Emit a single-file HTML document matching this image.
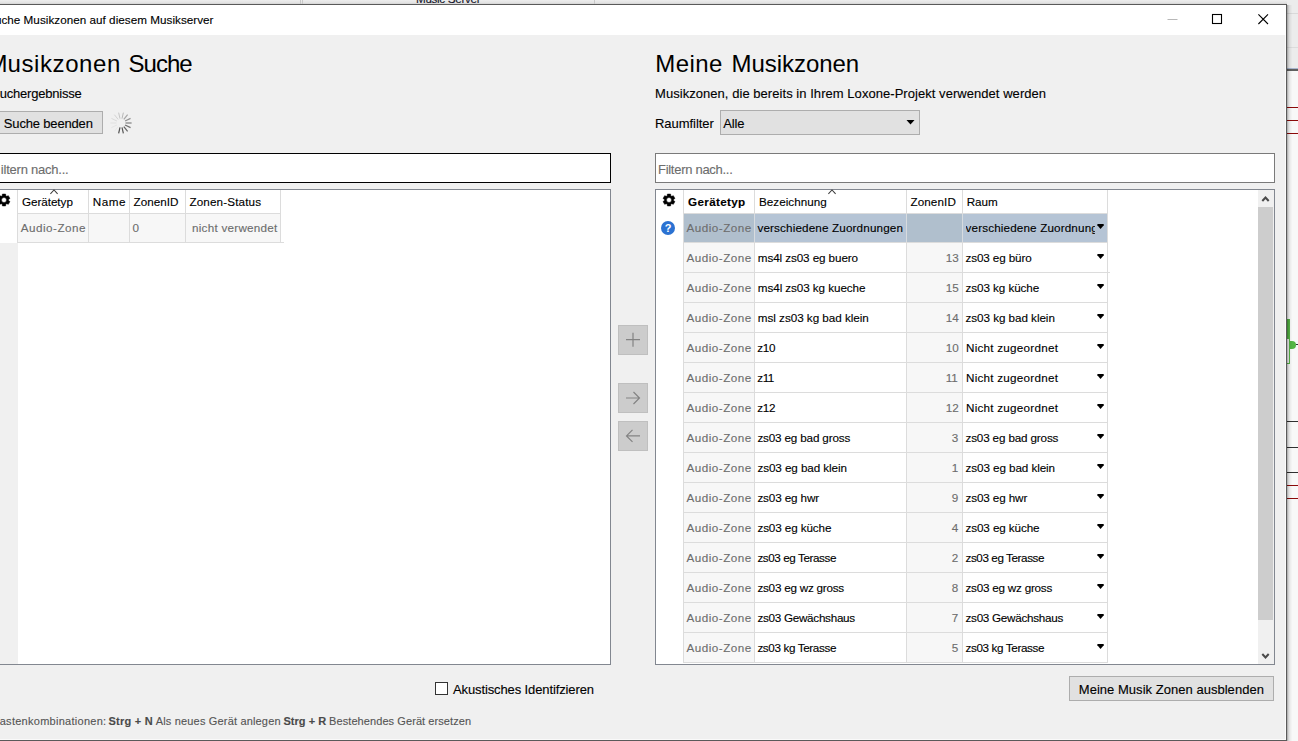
<!DOCTYPE html>
<html lang="de"><head><meta charset="utf-8"><title>Suche Musikzonen auf diesem Musikserver</title>
<style>
html,body{margin:0;padding:0}
body{width:1298px;height:741px;overflow:hidden;position:relative;background:#fff;font-family:"Liberation Sans",sans-serif;font-size:12px;color:#000}
div,span,svg{position:absolute;box-sizing:border-box}
.t{white-space:pre;line-height:1;display:block;-webkit-text-stroke:.12px currentColor}
.h{-webkit-text-stroke:0}
#win{left:0;top:4px;width:1287px;height:737px;background:#f0f0f0;border:1px solid #5a5a5a;border-left:none;overflow:hidden}
#tb{left:0;top:0;width:1286px;height:30px;background:#fff}
.inp{background:#fff;border:1px solid #7a7a7a}
.grid{background:#fff;border:1px solid #828790;overflow:hidden}
.btn{background:#e1e1e1;border:1px solid #adadad}
.vl{width:1px;background:#dcdcdc}
.hl{height:1px;background:#dcdcdc}
.c{background:#f7f7f7}
.dd{width:0;height:0;border-left:3.6px solid transparent;border-right:3.6px solid transparent;border-top:4.8px solid #000}
</style></head><body>
<div id="bg" style="left:0;top:0;width:1298px;height:741px;background:#fff;overflow:hidden">
<div style="left:0;top:0;width:1298px;height:5px;background:linear-gradient(#ededed,#e2e2e2 60%,#bdbdbd)"></div>
<div style="left:300px;top:0;width:1px;height:4px;background:#c8c8c8"></div><div style="left:302px;top:0;width:1px;height:4px;background:#c8c8c8"></div>
<div style="left:594px;top:0;width:1px;height:4px;background:#c8c8c8"></div>
<span class="t" style="left:416.00px;top:-6.70px;font-size:11.7px;letter-spacing:-0.328px;color:#15152a;">Music Server</span>
<div style="left:1287px;top:0;width:11px;height:741px;background:#f8f8f8"></div>
<div style="left:1287px;top:0;width:11px;height:69px;background:#ececec"></div>
<div style="left:1287px;top:13px;width:11px;height:1px;background:#d9d9d9"></div>
<div style="left:1287px;top:47px;width:11px;height:1px;background:#dcdcdc"></div>
<div style="left:1287px;top:68px;width:11px;height:1px;background:#a9b6cf"></div>
<div style="left:1287px;top:69px;width:11px;height:2px;background:#606060"></div>
<div style="left:1287px;top:107px;width:11px;height:1px;background:#8b0a0a"></div>
<div style="left:1287px;top:120px;width:11px;height:1px;background:#8b0a0a"></div>
<div style="left:1287px;top:133px;width:11px;height:1px;background:#8b0a0a"></div>
<div style="left:1287px;top:319px;width:3px;height:45px;border:1px solid #55b545;border-left:none;border-top:none;background:#f4f4f4"></div>
<div style="left:1287px;top:319px;width:3px;height:20px;background:#55b545"></div>
<div style="left:1290px;top:341px;width:6px;height:8px;border-radius:0 4px 4px 0;background:#55b545"></div>
<div style="left:1296px;top:344px;width:2px;height:1px;background:#333"></div>
<div style="left:1287px;top:421px;width:11px;height:1px;background:#303030"></div>
<div style="left:1287px;top:447px;width:11px;height:1px;background:#303030"></div>
<div style="left:1287px;top:472px;width:11px;height:1px;background:#303030"></div>
<div style="left:1287px;top:485px;width:11px;height:1px;background:#8b0a0a"></div>
<div style="left:1287px;top:498px;width:11px;height:1px;background:#8b0a0a"></div>
<div style="left:1287px;top:5px;width:1px;height:736px;background:rgba(0,0,0,.27)"></div><div style="left:1288px;top:5px;width:1px;height:736px;background:rgba(0,0,0,.15)"></div><div style="left:1289px;top:5px;width:1px;height:736px;background:rgba(0,0,0,.08)"></div><div style="left:1290px;top:5px;width:1px;height:736px;background:rgba(0,0,0,.045)"></div><div style="left:1291px;top:5px;width:1px;height:736px;background:rgba(0,0,0,.02)"></div>
</div>
<div id="win"><div id="tb"></div><div style="left:1285px;top:30px;width:1px;height:705px;background:#fbfbfb"></div><div style="left:0;top:734px;width:1286px;height:1px;background:#fafafa"></div>
<svg style="left:1160px;top:5px" width="120" height="20" viewBox="0 0 120 20" fill="none"><path d="M7.5 9.5h10" stroke="#b8b8b8" stroke-width="1"/><rect x="52.5" y="4.5" width="9" height="9" stroke="#000" stroke-width="1.1"/><path d="M98.4 4.4l9.6 9.6M108 4.4l-9.6 9.6" stroke="#000" stroke-width="1.1"/></svg>
<div class="btn" style="left:-10px;top:106px;width:113px;height:23px;"></div>
<svg style="left:109.2px;top:105.9px" width="24" height="24" viewBox="-12 -12 24 24"><line x1="-1.00" y1="4.39" x2="-2.36" y2="10.33" stroke="#505050" stroke-width="1.2"/><line x1="1.00" y1="4.39" x2="2.36" y2="10.33" stroke="#555555" stroke-width="1.2"/><line x1="2.81" y1="3.52" x2="6.61" y2="8.29" stroke="#626262" stroke-width="1.2"/><line x1="4.05" y1="1.95" x2="9.55" y2="4.60" stroke="#707070" stroke-width="1.2"/><line x1="4.50" y1="0.00" x2="10.60" y2="0.00" stroke="#7e7e7e" stroke-width="1.2"/><line x1="4.05" y1="-1.95" x2="9.55" y2="-4.60" stroke="#929292" stroke-width="1.2"/><line x1="2.81" y1="-3.52" x2="6.61" y2="-8.29" stroke="#a6a6a6" stroke-width="1.2"/><line x1="1.00" y1="-4.39" x2="2.36" y2="-10.33" stroke="#b8b8b8" stroke-width="1"/><line x1="-1.00" y1="-4.39" x2="-2.36" y2="-10.33" stroke="#c6c6c6" stroke-width="1"/><line x1="-2.81" y1="-3.52" x2="-6.61" y2="-8.29" stroke="#d2d2d2" stroke-width="1"/><line x1="-4.05" y1="-1.95" x2="-9.55" y2="-4.60" stroke="#dadada" stroke-width="1"/><line x1="-4.50" y1="0.00" x2="-10.60" y2="0.00" stroke="#e0e0e0" stroke-width="1"/><line x1="-4.05" y1="1.95" x2="-9.55" y2="4.60" stroke="#e4e4e4" stroke-width="1"/><line x1="-2.81" y1="3.52" x2="-6.61" y2="8.29" stroke="#e8e8e8" stroke-width="1"/></svg>
<div class="inp" style="left:-10px;top:148px;width:621px;height:30px;border-color:#000"></div>
<div class="grid" style="left:-10px;top:184px;width:621px;height:476px;"></div>
<div class="" style="left:0px;top:238px;width:18px;height:421px;background:#f0f0f0"></div>
<div class="c" style="left:18px;top:209px;width:263px;height:28px;"></div>
<div class="vl" style="left:17px;top:185px;width:1px;height:53px;"></div>
<div class="vl" style="left:88px;top:185px;width:1px;height:53px;"></div>
<div class="vl" style="left:129px;top:185px;width:1px;height:53px;"></div>
<div class="vl" style="left:185px;top:185px;width:1px;height:53px;"></div>
<div class="vl" style="left:280px;top:185px;width:1px;height:53px;"></div>
<div class="hl" style="left:18px;top:208px;width:263px;height:1px;"></div>
<div class="hl" style="left:18px;top:237px;width:266px;height:1px;"></div>
<svg style="left:-4px;top:187.05px" width="16" height="16" viewBox="-8 -8 16 16"><path fill="#000" fill-rule="evenodd" stroke="#000" stroke-width=".5" stroke-linejoin="round" d="M1.85 -4.16L1.59 -5.94L-1.59 -5.94L-1.85 -4.16L-2.67 -3.68L-4.35 -4.35L-5.94 -1.59L-4.53 -0.48L-4.53 0.48L-5.94 1.59L-4.35 4.35L-2.67 3.68L-1.85 4.16L-1.59 5.94L1.59 5.94L1.85 4.16L2.67 3.68L4.35 4.35L5.94 1.59L4.53 0.48L4.53 -0.48L5.94 -1.59L4.35 -4.35L2.67 -3.68ZM0-2.5a2.5 2.5 0 100 5 2.5 2.5 0 000-5z"/></svg>
<svg style="left:49.5px;top:184.3px" width="8" height="6" viewBox="0 0 8 6"><path d="M.4 4.9l3.6-3.9 3.6 3.9" fill="none" stroke="#3c3c3c" stroke-width="1.05"/></svg>
<div class="" style="left:435px;top:677px;width:13px;height:13px;background:#fff;border:1px solid #333"></div>
<div class="" style="left:618px;top:320px;width:30px;height:30px;background:#cccccc;border:1px solid #bfbfbf"></div>
<svg style="left:618px;top:320px" width="30" height="30" viewBox="0 0 30 30"><path d="M15 7.7v14M8 14.7h14" fill="none" stroke="#838383" stroke-width="1.2"/></svg>
<div class="" style="left:618px;top:378px;width:30px;height:30px;background:#cccccc;border:1px solid #bfbfbf"></div>
<svg style="left:618px;top:378px" width="30" height="30" viewBox="0 0 30 30"><path d="M8 15h13.5M15.5 9l6 6-6 6" fill="none" stroke="#838383" stroke-width="1.2"/></svg>
<div class="" style="left:618px;top:416px;width:30px;height:30px;background:#cccccc;border:1px solid #bfbfbf"></div>
<svg style="left:618px;top:416px" width="30" height="30" viewBox="0 0 30 30"><path d="M22 14.9H8.5M14.5 8.9l-6 6 6 6" fill="none" stroke="#838383" stroke-width="1.2"/></svg>
<div class="btn" style="left:720px;top:105px;width:200px;height:25px;background:#e1e1e1;border-color:#adadad"></div>
<svg style="left:906px;top:114.8px" width="10" height="6" viewBox="0 0 10 6"><path d="M.5 0h8L4.5 4.4z" fill="#000"/></svg>
<div class="inp" style="left:655px;top:148px;width:620px;height:30px;"></div>
<div class="grid" style="left:655px;top:184px;width:620px;height:476px;"></div>
<div class="c" style="left:684px;top:238px;width:70px;height:420px;"></div>
<div class="c" style="left:907px;top:238px;width:55px;height:420px;"></div>
<div class="" style="left:684px;top:209px;width:423px;height:28px;background:#b5c4d5"></div>
<div class="" style="left:684px;top:209px;width:70px;height:28px;background:#b0bfcd"></div>
<div class="" style="left:907px;top:209px;width:55px;height:28px;background:#b0bfcd"></div>
<div class="vl" style="left:683px;top:185px;width:1px;height:473px;"></div>
<div class="vl" style="left:754px;top:185px;width:1px;height:473px;"></div>
<div class="vl" style="left:906px;top:185px;width:1px;height:473px;"></div>
<div class="vl" style="left:962px;top:185px;width:1px;height:473px;"></div>
<div class="vl" style="left:1107px;top:185px;width:1px;height:473px;"></div>
<div class="" style="left:754px;top:209px;width:1px;height:28px;background:#d7dbdf"></div>
<div class="" style="left:906px;top:209px;width:1px;height:28px;background:#d7dbdf"></div>
<div class="" style="left:962px;top:209px;width:1px;height:28px;background:#d7dbdf"></div>
<div class="hl" style="left:684px;top:208px;width:424px;height:1px;"></div>
<div class="hl" style="left:684px;top:237px;width:424px;height:1px;"></div>
<div class="hl" style="left:684px;top:267px;width:426px;height:1px;"></div>
<div class="hl" style="left:684px;top:297px;width:424px;height:1px;"></div>
<div class="hl" style="left:684px;top:327px;width:424px;height:1px;"></div>
<div class="hl" style="left:684px;top:357px;width:424px;height:1px;"></div>
<div class="hl" style="left:684px;top:387px;width:424px;height:1px;"></div>
<div class="hl" style="left:684px;top:417px;width:424px;height:1px;"></div>
<div class="hl" style="left:684px;top:447px;width:424px;height:1px;"></div>
<div class="hl" style="left:684px;top:477px;width:424px;height:1px;"></div>
<div class="hl" style="left:684px;top:507px;width:424px;height:1px;"></div>
<div class="hl" style="left:684px;top:537px;width:424px;height:1px;"></div>
<div class="hl" style="left:684px;top:567px;width:424px;height:1px;"></div>
<div class="hl" style="left:684px;top:597px;width:424px;height:1px;"></div>
<div class="hl" style="left:684px;top:627px;width:424px;height:1px;"></div>
<div class="hl" style="left:684px;top:657px;width:424px;height:1px;"></div>
<svg style="left:660.9px;top:187.05px" width="16" height="16" viewBox="-8 -8 16 16"><path fill="#000" fill-rule="evenodd" stroke="#000" stroke-width=".5" stroke-linejoin="round" d="M1.85 -4.16L1.59 -5.94L-1.59 -5.94L-1.85 -4.16L-2.67 -3.68L-4.35 -4.35L-5.94 -1.59L-4.53 -0.48L-4.53 0.48L-5.94 1.59L-4.35 4.35L-2.67 3.68L-1.85 4.16L-1.59 5.94L1.59 5.94L1.85 4.16L2.67 3.68L4.35 4.35L5.94 1.59L4.53 0.48L4.53 -0.48L5.94 -1.59L4.35 -4.35L2.67 -3.68ZM0-2.5a2.5 2.5 0 100 5 2.5 2.5 0 000-5z"/></svg>
<svg style="left:827.5px;top:184.3px" width="8" height="6" viewBox="0 0 8 6"><path d="M.4 4.9l3.6-3.9 3.6 3.9" fill="none" stroke="#3c3c3c" stroke-width="1.05"/></svg>
<svg style="left:660px;top:215px" width="16" height="16" viewBox="0 0 16 16"><circle cx="8" cy="8" r="7" fill="#2b72d2"/><text x="8" y="12" text-anchor="middle" font-family="Liberation Sans, sans-serif" font-weight="700" font-size="11" fill="#fff">?</text></svg>
<svg style="left:1096.5px;top:219.2px" width="8" height="6" viewBox="0 0 8 6"><path d="M.4 0h6.3v1.3L3.55 5.1.4 1.3z" fill="#000"/></svg>
<svg style="left:1096.5px;top:249.2px" width="8" height="6" viewBox="0 0 8 6"><path d="M.4 0h6.3v1.3L3.55 5.1.4 1.3z" fill="#000"/></svg>
<svg style="left:1096.5px;top:279.2px" width="8" height="6" viewBox="0 0 8 6"><path d="M.4 0h6.3v1.3L3.55 5.1.4 1.3z" fill="#000"/></svg>
<svg style="left:1096.5px;top:309.2px" width="8" height="6" viewBox="0 0 8 6"><path d="M.4 0h6.3v1.3L3.55 5.1.4 1.3z" fill="#000"/></svg>
<svg style="left:1096.5px;top:339.2px" width="8" height="6" viewBox="0 0 8 6"><path d="M.4 0h6.3v1.3L3.55 5.1.4 1.3z" fill="#000"/></svg>
<svg style="left:1096.5px;top:369.2px" width="8" height="6" viewBox="0 0 8 6"><path d="M.4 0h6.3v1.3L3.55 5.1.4 1.3z" fill="#000"/></svg>
<svg style="left:1096.5px;top:399.2px" width="8" height="6" viewBox="0 0 8 6"><path d="M.4 0h6.3v1.3L3.55 5.1.4 1.3z" fill="#000"/></svg>
<svg style="left:1096.5px;top:429.2px" width="8" height="6" viewBox="0 0 8 6"><path d="M.4 0h6.3v1.3L3.55 5.1.4 1.3z" fill="#000"/></svg>
<svg style="left:1096.5px;top:459.2px" width="8" height="6" viewBox="0 0 8 6"><path d="M.4 0h6.3v1.3L3.55 5.1.4 1.3z" fill="#000"/></svg>
<svg style="left:1096.5px;top:489.2px" width="8" height="6" viewBox="0 0 8 6"><path d="M.4 0h6.3v1.3L3.55 5.1.4 1.3z" fill="#000"/></svg>
<svg style="left:1096.5px;top:519.2px" width="8" height="6" viewBox="0 0 8 6"><path d="M.4 0h6.3v1.3L3.55 5.1.4 1.3z" fill="#000"/></svg>
<svg style="left:1096.5px;top:549.2px" width="8" height="6" viewBox="0 0 8 6"><path d="M.4 0h6.3v1.3L3.55 5.1.4 1.3z" fill="#000"/></svg>
<svg style="left:1096.5px;top:579.2px" width="8" height="6" viewBox="0 0 8 6"><path d="M.4 0h6.3v1.3L3.55 5.1.4 1.3z" fill="#000"/></svg>
<svg style="left:1096.5px;top:609.2px" width="8" height="6" viewBox="0 0 8 6"><path d="M.4 0h6.3v1.3L3.55 5.1.4 1.3z" fill="#000"/></svg>
<svg style="left:1096.5px;top:639.2px" width="8" height="6" viewBox="0 0 8 6"><path d="M.4 0h6.3v1.3L3.55 5.1.4 1.3z" fill="#000"/></svg>
<div class="" style="left:1258px;top:185px;width:16px;height:474px;background:#f0f0f0"></div>
<div class="" style="left:1258px;top:202px;width:15px;height:413px;background:#cdcdcd"></div>
<svg style="left:1261px;top:190.3px" width="9" height="7" viewBox="0 0 9 7"><path d="M1.3 6l3.2-3.5 3.2 3.5" fill="none" stroke="#4a4a4a" stroke-width="2"/></svg>
<svg style="left:1261px;top:647.6px" width="9" height="7" viewBox="0 0 9 7"><path d="M1.3 1l3.2 3.5 3.2-3.5" fill="none" stroke="#4a4a4a" stroke-width="2"/></svg>
<div class="btn" style="left:1069px;top:671px;width:205px;height:25px;"></div>
<span class="t" style="left:-12.90px;top:9.10px;font-size:11.7px;letter-spacing:0.027px;"><span style="position:static;letter-spacing:0px">Su</span>che Musikzonen auf diesem Musikserver</span>
<span class="t h" style="left:-12.50px;top:46.68px;font-size:24px;letter-spacing:0.590px;"><span style="position:static;letter-spacing:0px">M</span>usikzonen</span>
<span class="t h" style="left:128.60px;top:46.68px;font-size:24px;letter-spacing:-0.991px;">Suche</span>
<span class="t" style="left:-8.97px;top:82.00px;font-size:13px;letter-spacing:-0.214px;"><span style="position:static;letter-spacing:0px">S</span>uchergebnisse</span>
<span class="t" style="left:3.85px;top:112.00px;font-size:13px;letter-spacing:-0.170px;">Suche beenden</span>
<span class="t" style="left:-9.65px;top:158.00px;font-size:13px;letter-spacing:-0.225px;color:#6d6d6d;"><span style="position:static;letter-spacing:2.5px">F</span>iltern nach...</span>
<span class="t" style="left:21.90px;top:191.10px;font-size:11.7px;letter-spacing:-0.041px;">Gerätetyp</span>
<span class="t" style="left:92.80px;top:191.10px;font-size:11.7px;letter-spacing:0.504px;">Name</span>
<span class="t" style="left:133.60px;top:191.10px;font-size:11.7px;letter-spacing:0.012px;">ZonenID</span>
<span class="t" style="left:189.40px;top:191.10px;font-size:11.7px;letter-spacing:0.139px;">Zonen-Status</span>
<span class="t" style="left:20.80px;top:217.10px;font-size:11.7px;letter-spacing:0.474px;color:#6d6d6d;">Audio-Zone</span>
<span class="t" style="left:132.60px;top:217.10px;font-size:11.7px;letter-spacing:0.000px;color:#6d6d6d;">0</span>
<span class="t" style="left:192.00px;top:217.10px;font-size:11.7px;letter-spacing:0.246px;color:#6d6d6d;">nicht verwendet</span>
<span class="t" style="left:453.00px;top:677.70px;font-size:13px;letter-spacing:-0.117px;">Akustisches Identifzieren</span>
<span class="t" style="left:-7.03px;top:710.69px;font-size:11px;letter-spacing:0.271px;color:#555;"><span style="position:static;letter-spacing:0px">T</span>astenkombinationen:</span>
<span class="t" style="left:108.50px;top:710.69px;font-size:11px;letter-spacing:0.259px;font-weight:700;color:#4a4a4a;">Strg + N</span>
<span class="t" style="left:155.70px;top:710.69px;font-size:11px;letter-spacing:0.173px;color:#555;">Als neues Gerät anlegen</span>
<span class="t" style="left:283.40px;top:710.69px;font-size:11px;letter-spacing:0.059px;font-weight:700;color:#4a4a4a;">Strg + R</span>
<span class="t" style="left:329.10px;top:710.69px;font-size:11px;letter-spacing:0.079px;color:#555;">Bestehendes Gerät ersetzen</span>
<span class="t h" style="left:655.30px;top:46.68px;font-size:24px;letter-spacing:0.406px;">Meine</span>
<span class="t h" style="left:731.60px;top:46.68px;font-size:24px;letter-spacing:-0.063px;">Musikzonen</span>
<span class="t" style="left:655.00px;top:82.00px;font-size:13px;letter-spacing:0.048px;">Musikzonen, die bereits in Ihrem Loxone-Projekt verwendet werden</span>
<span class="t" style="left:654.90px;top:112.00px;font-size:13px;letter-spacing:-0.028px;">Raumfilter</span>
<span class="t" style="left:723.30px;top:112.00px;font-size:13px;letter-spacing:-0.129px;">Alle</span>
<span class="t" style="left:658.00px;top:158.00px;font-size:13px;letter-spacing:-0.283px;color:#6d6d6d;">Filtern nach...</span>
<span class="t" style="left:688.10px;top:191.10px;font-size:11.7px;letter-spacing:0.303px;font-weight:700;">Gerätetyp</span>
<span class="t" style="left:759.00px;top:191.10px;font-size:11.7px;letter-spacing:0.011px;">Bezeichnung</span>
<span class="t" style="left:910.40px;top:191.10px;font-size:11.7px;letter-spacing:0.112px;">ZonenID</span>
<span class="t" style="left:966.70px;top:191.10px;font-size:11.7px;letter-spacing:-0.029px;">Raum</span>
<span class="t" style="left:1078.80px;top:677.70px;font-size:13px;letter-spacing:0.030px;">Meine Musik Zonen ausblenden</span>
<span class="t" style="left:686.60px;top:217.10px;font-size:11.7px;letter-spacing:0.462px;color:#6d6d6d;">Audio-Zone</span>
<span class="t" style="left:757.40px;top:217.10px;font-size:11.7px;letter-spacing:0.143px;">verschiedene Zuordnungen</span>
<span class="t" style="left:965.50px;top:217.10px;font-size:11.7px;letter-spacing:0.143px;width:129.70px;overflow:hidden;">verschiedene Zuordnungen</span>
<span class="t" style="left:686.60px;top:247.10px;font-size:11.7px;letter-spacing:0.462px;color:#6d6d6d;">Audio-Zone</span>
<span class="t" style="left:757.80px;top:247.10px;font-size:11.7px;letter-spacing:-0.100px;">ms4l zs03 eg buero</span>
<span class="t" style="left:945.70px;top:247.10px;font-size:11.7px;letter-spacing:0.000px;color:#6d6d6d;">13</span>
<span class="t" style="left:965.50px;top:247.10px;font-size:11.7px;letter-spacing:-0.125px;">zs03 eg büro</span>
<span class="t" style="left:686.60px;top:277.10px;font-size:11.7px;letter-spacing:0.462px;color:#6d6d6d;">Audio-Zone</span>
<span class="t" style="left:757.80px;top:277.10px;font-size:11.7px;letter-spacing:-0.080px;">ms4l zs03 kg kueche</span>
<span class="t" style="left:945.70px;top:277.10px;font-size:11.7px;letter-spacing:0.000px;color:#6d6d6d;">15</span>
<span class="t" style="left:965.50px;top:277.10px;font-size:11.7px;letter-spacing:-0.077px;">zs03 kg küche</span>
<span class="t" style="left:686.60px;top:307.10px;font-size:11.7px;letter-spacing:0.462px;color:#6d6d6d;">Audio-Zone</span>
<span class="t" style="left:757.80px;top:307.10px;font-size:11.7px;letter-spacing:-0.037px;">msl zs03 kg bad klein</span>
<span class="t" style="left:945.70px;top:307.10px;font-size:11.7px;letter-spacing:0.000px;color:#6d6d6d;">14</span>
<span class="t" style="left:965.50px;top:307.10px;font-size:11.7px;letter-spacing:-0.057px;">zs03 kg bad klein</span>
<span class="t" style="left:686.60px;top:337.10px;font-size:11.7px;letter-spacing:0.462px;color:#6d6d6d;">Audio-Zone</span>
<span class="t" style="left:757.30px;top:337.10px;font-size:11.7px;letter-spacing:-0.330px;">z10</span>
<span class="t" style="left:945.70px;top:337.10px;font-size:11.7px;letter-spacing:0.000px;color:#6d6d6d;">10</span>
<span class="t" style="left:966.00px;top:337.10px;font-size:11.7px;letter-spacing:0.236px;">Nicht zugeordnet</span>
<span class="t" style="left:686.60px;top:367.10px;font-size:11.7px;letter-spacing:0.462px;color:#6d6d6d;">Audio-Zone</span>
<span class="t" style="left:757.30px;top:367.10px;font-size:11.7px;letter-spacing:-0.492px;">z11</span>
<span class="t" style="left:945.70px;top:367.10px;font-size:11.7px;letter-spacing:0.000px;color:#6d6d6d;">11</span>
<span class="t" style="left:966.00px;top:367.10px;font-size:11.7px;letter-spacing:0.236px;">Nicht zugeordnet</span>
<span class="t" style="left:686.60px;top:397.10px;font-size:11.7px;letter-spacing:0.462px;color:#6d6d6d;">Audio-Zone</span>
<span class="t" style="left:757.30px;top:397.10px;font-size:11.7px;letter-spacing:-0.330px;">z12</span>
<span class="t" style="left:945.70px;top:397.10px;font-size:11.7px;letter-spacing:0.000px;color:#6d6d6d;">12</span>
<span class="t" style="left:966.00px;top:397.10px;font-size:11.7px;letter-spacing:0.236px;">Nicht zugeordnet</span>
<span class="t" style="left:686.60px;top:427.10px;font-size:11.7px;letter-spacing:0.462px;color:#6d6d6d;">Audio-Zone</span>
<span class="t" style="left:757.40px;top:427.10px;font-size:11.7px;letter-spacing:-0.163px;">zs03 eg bad gross</span>
<span class="t" style="left:951.80px;top:427.10px;font-size:11.7px;letter-spacing:0.000px;color:#6d6d6d;">3</span>
<span class="t" style="left:965.50px;top:427.10px;font-size:11.7px;letter-spacing:-0.163px;">zs03 eg bad gross</span>
<span class="t" style="left:686.60px;top:457.10px;font-size:11.7px;letter-spacing:0.462px;color:#6d6d6d;">Audio-Zone</span>
<span class="t" style="left:757.40px;top:457.10px;font-size:11.7px;letter-spacing:-0.086px;">zs03 eg bad klein</span>
<span class="t" style="left:951.80px;top:457.10px;font-size:11.7px;letter-spacing:0.000px;color:#6d6d6d;">1</span>
<span class="t" style="left:965.50px;top:457.10px;font-size:11.7px;letter-spacing:-0.086px;">zs03 eg bad klein</span>
<span class="t" style="left:686.60px;top:487.10px;font-size:11.7px;letter-spacing:0.462px;color:#6d6d6d;">Audio-Zone</span>
<span class="t" style="left:757.40px;top:487.10px;font-size:11.7px;letter-spacing:-0.122px;">zs03 eg hwr</span>
<span class="t" style="left:951.80px;top:487.10px;font-size:11.7px;letter-spacing:0.000px;color:#6d6d6d;">9</span>
<span class="t" style="left:965.50px;top:487.10px;font-size:11.7px;letter-spacing:-0.122px;">zs03 eg hwr</span>
<span class="t" style="left:686.60px;top:517.10px;font-size:11.7px;letter-spacing:0.462px;color:#6d6d6d;">Audio-Zone</span>
<span class="t" style="left:757.40px;top:517.10px;font-size:11.7px;letter-spacing:-0.106px;">zs03 eg küche</span>
<span class="t" style="left:951.80px;top:517.10px;font-size:11.7px;letter-spacing:0.000px;color:#6d6d6d;">4</span>
<span class="t" style="left:965.50px;top:517.10px;font-size:11.7px;letter-spacing:-0.106px;">zs03 eg küche</span>
<span class="t" style="left:686.60px;top:547.10px;font-size:11.7px;letter-spacing:0.462px;color:#6d6d6d;">Audio-Zone</span>
<span class="t" style="left:757.40px;top:547.10px;font-size:11.7px;letter-spacing:-0.422px;">zs03 eg Terasse</span>
<span class="t" style="left:951.80px;top:547.10px;font-size:11.7px;letter-spacing:0.000px;color:#6d6d6d;">2</span>
<span class="t" style="left:965.50px;top:547.10px;font-size:11.7px;letter-spacing:-0.422px;">zs03 eg Terasse</span>
<span class="t" style="left:686.60px;top:577.10px;font-size:11.7px;letter-spacing:0.462px;color:#6d6d6d;">Audio-Zone</span>
<span class="t" style="left:757.40px;top:577.10px;font-size:11.7px;letter-spacing:-0.233px;">zs03 eg wz gross</span>
<span class="t" style="left:951.80px;top:577.10px;font-size:11.7px;letter-spacing:0.000px;color:#6d6d6d;">8</span>
<span class="t" style="left:965.50px;top:577.10px;font-size:11.7px;letter-spacing:-0.233px;">zs03 eg wz gross</span>
<span class="t" style="left:686.60px;top:607.10px;font-size:11.7px;letter-spacing:0.462px;color:#6d6d6d;">Audio-Zone</span>
<span class="t" style="left:757.40px;top:607.10px;font-size:11.7px;letter-spacing:-0.280px;">zs03 Gewächshaus</span>
<span class="t" style="left:951.80px;top:607.10px;font-size:11.7px;letter-spacing:0.000px;color:#6d6d6d;">7</span>
<span class="t" style="left:965.50px;top:607.10px;font-size:11.7px;letter-spacing:-0.280px;">zs03 Gewächshaus</span>
<span class="t" style="left:686.60px;top:637.10px;font-size:11.7px;letter-spacing:0.462px;color:#6d6d6d;">Audio-Zone</span>
<span class="t" style="left:757.40px;top:637.10px;font-size:11.7px;letter-spacing:-0.375px;">zs03 kg Terasse</span>
<span class="t" style="left:951.80px;top:637.10px;font-size:11.7px;letter-spacing:0.000px;color:#6d6d6d;">5</span>
<span class="t" style="left:965.50px;top:637.10px;font-size:11.7px;letter-spacing:-0.375px;">zs03 kg Terasse</span>
</div>
</body></html>
